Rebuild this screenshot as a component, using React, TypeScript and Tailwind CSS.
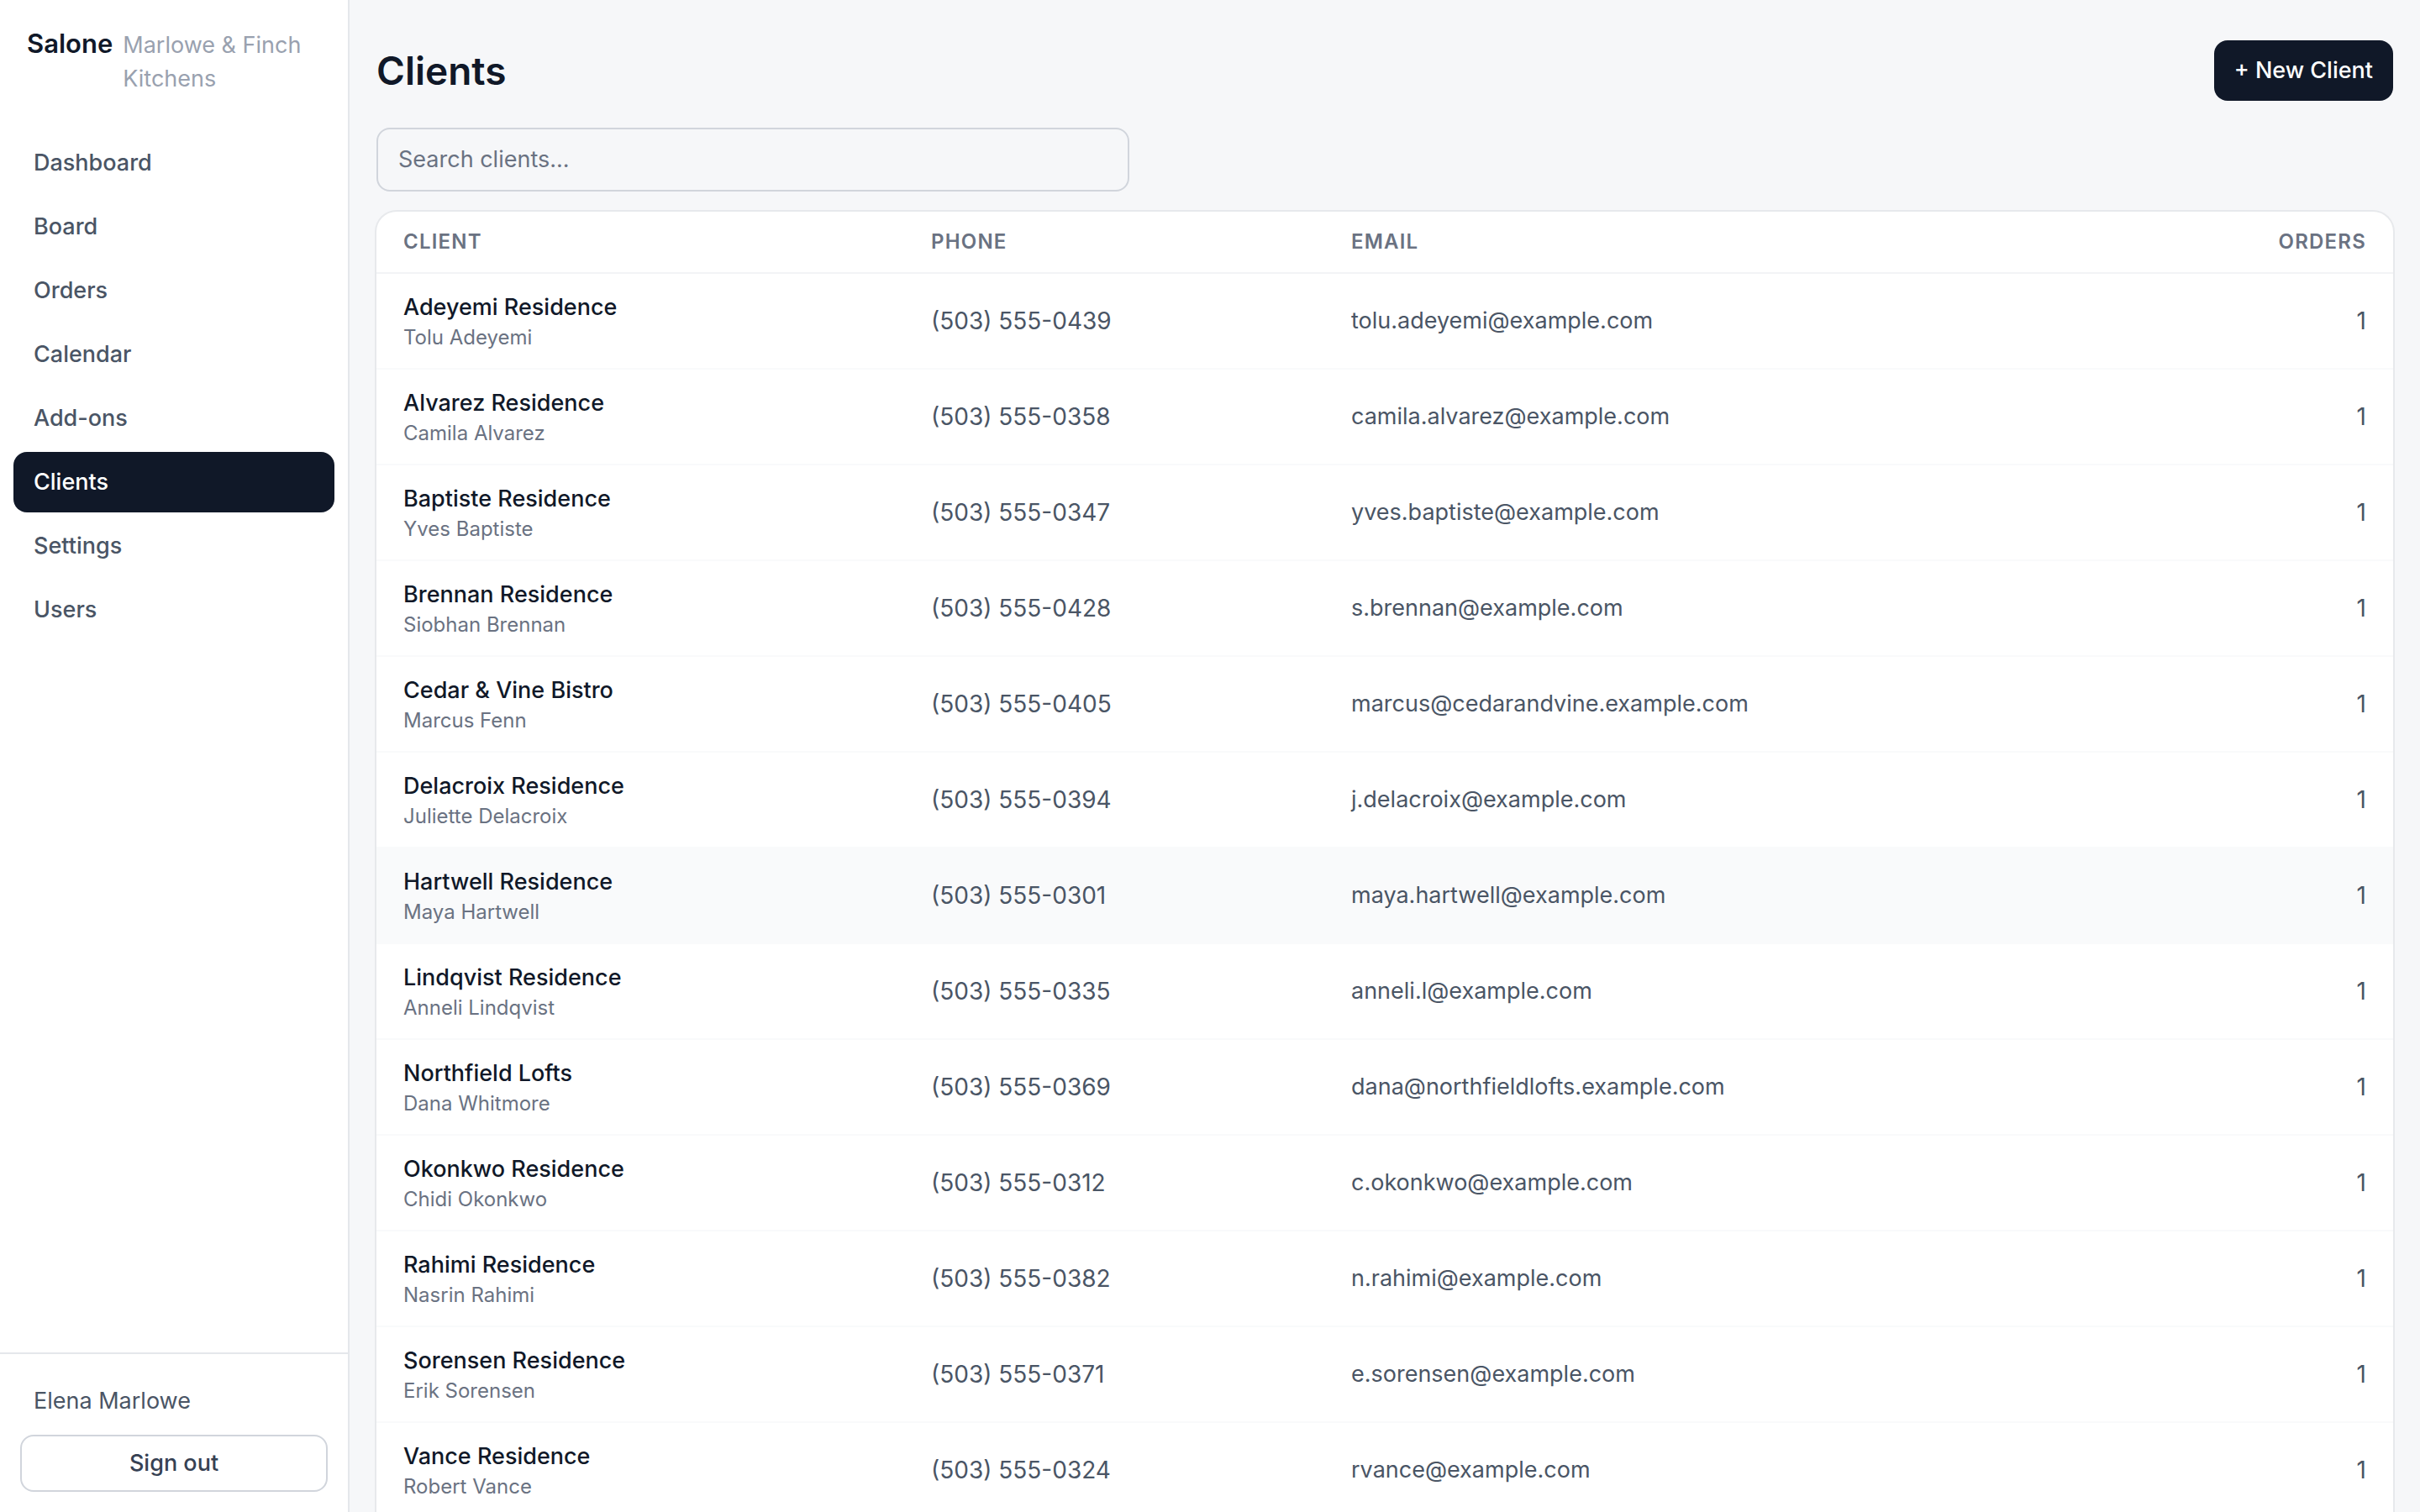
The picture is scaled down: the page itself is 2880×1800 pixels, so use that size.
const navItems = ["Dashboard", "Board", "Orders", "Calendar", "Add-ons", "Clients", "Settings", "Users"];

type Client = { name: string; contact: string; phone: string; email: string; orders: number };

const clients: Client[] = [
  { name: "Adeyemi Residence", contact: "Tolu Adeyemi", phone: "(503) 555-0439", email: "tolu.adeyemi@example.com", orders: 1 },
  { name: "Alvarez Residence", contact: "Camila Alvarez", phone: "(503) 555-0358", email: "camila.alvarez@example.com", orders: 1 },
  { name: "Baptiste Residence", contact: "Yves Baptiste", phone: "(503) 555-0347", email: "yves.baptiste@example.com", orders: 1 },
  { name: "Brennan Residence", contact: "Siobhan Brennan", phone: "(503) 555-0428", email: "s.brennan@example.com", orders: 1 },
  { name: "Cedar & Vine Bistro", contact: "Marcus Fenn", phone: "(503) 555-0405", email: "marcus@cedarandvine.example.com", orders: 1 },
  { name: "Delacroix Residence", contact: "Juliette Delacroix", phone: "(503) 555-0394", email: "j.delacroix@example.com", orders: 1 },
  { name: "Hartwell Residence", contact: "Maya Hartwell", phone: "(503) 555-0301", email: "maya.hartwell@example.com", orders: 1 },
  { name: "Lindqvist Residence", contact: "Anneli Lindqvist", phone: "(503) 555-0335", email: "anneli.l@example.com", orders: 1 },
  { name: "Northfield Lofts", contact: "Dana Whitmore", phone: "(503) 555-0369", email: "dana@northfieldlofts.example.com", orders: 1 },
  { name: "Okonkwo Residence", contact: "Chidi Okonkwo", phone: "(503) 555-0312", email: "c.okonkwo@example.com", orders: 1 },
  { name: "Rahimi Residence", contact: "Nasrin Rahimi", phone: "(503) 555-0382", email: "n.rahimi@example.com", orders: 1 },
  { name: "Sorensen Residence", contact: "Erik Sorensen", phone: "(503) 555-0371", email: "e.sorensen@example.com", orders: 1 },
  { name: "Vance Residence", contact: "Robert Vance", phone: "(503) 555-0324", email: "rvance@example.com", orders: 1 },
];

function Sidebar() {
  return (
    <aside className="flex w-104 shrink-0 flex-col border-r-2 border-[#e5e7eb] bg-white">
      <div className="flex items-baseline gap-3 px-8 pt-7 pb-7">
        <span className="text-[31px] leading-12 font-semibold text-[#101828]">Salone</span>
        <span className="text-[27px] leading-10 text-[#99a1af]">Marlowe &amp; Finch Kitchens</span>
      </div>
      <nav className="flex flex-1 flex-col gap-1 p-4">
        {navItems.map((item) => (
          <a
            key={item}
            href="#"
            aria-current={item === "Clients" ? "page" : undefined}
            className={
              item === "Clients"
                ? "rounded-2xl bg-[#101828] px-6 py-4 text-[27px] leading-10 font-medium text-white"
                : "rounded-2xl px-6 py-4 text-[27px] leading-10 font-medium text-[#4a5565]"
            }
          >
            {item}
          </a>
        ))}
      </nav>
      <div className="border-t-2 border-[#e5e7eb] p-6">
        <div className="px-4 py-3 text-[27px] leading-10 text-[#4a5565]">Elena Marlowe</div>
        <button
          type="button"
          className="mt-2 w-full rounded-2xl border-2 border-[#d1d5dc] py-3 text-[27px] leading-10 font-medium text-[#364153]"
        >
          Sign out
        </button>
      </div>
    </aside>
  );
}

function ClientTable() {
  return (
    <div className="mt-6 overflow-hidden rounded-3xl bg-white pb-8 ring-2 ring-[#e7e9ec]">
      <table className="w-full table-fixed border-separate border-spacing-0 text-left">
        <thead>
          <tr className="text-2xl leading-8 tracking-wider text-[#6a7282] uppercase">
            <th scope="col" className="w-157/600 border-b-2 border-[#f3f4f6] px-8 py-5 font-semibold">Client</th>
            <th scope="col" className="w-5/24 border-b-2 border-[#f3f4f6] px-8 py-5 font-semibold">Phone</th>
            <th scope="col" className="border-b-2 border-[#f3f4f6] px-8 py-5 font-semibold">Email</th>
            <th scope="col" className="w-1/8 border-b-2 border-[#f3f4f6] px-8 py-5 text-right font-semibold">Orders</th>
          </tr>
        </thead>
        <tbody className="text-[27px] leading-10 text-[#4a5565]">
          {clients.map((client) => (
            <tr key={client.name} className={client.name === "Hartwell Residence" ? "bg-[#f9fafb]" : "bg-white"}>
              <td className="border-b-2 border-[#f9fafb] px-8 py-5">
                <div className="font-medium text-[#101828]">{client.name}</div>
                <div className="text-2xl leading-8 text-[#6a7282]">{client.contact}</div>
              </td>
              <td className="border-b-2 border-[#f9fafb] px-8 py-5 text-[28px]">{client.phone}</td>
              <td className="border-b-2 border-[#f9fafb] px-8 py-5">{client.email}</td>
              <td className="border-b-2 border-[#f9fafb] px-8 py-5 text-right text-[28px]">{client.orders}</td>
            </tr>
          ))}
        </tbody>
      </table>
    </div>
  );
}

export default function App() {
  return (
    <div className="flex h-screen overflow-hidden bg-[#f6f7f9] font-['Inter',sans-serif] antialiased">
      <Sidebar />
      <main className="min-w-0 flex-1 overflow-y-auto px-8 pt-12 [scrollbar-width:none]">
        <header className="flex items-center justify-between">
          <h1 className="text-[46px] leading-14 font-semibold text-[#101828]">Clients</h1>
          <button type="button" className="rounded-2xl bg-[#101828] px-6 py-4 text-[27px] leading-10 font-medium text-white">
            + New Client
          </button>
        </header>
        <input
          type="search"
          aria-label="Search clients"
          placeholder="Search clients..."
          className="mt-8 block w-full max-w-4xl rounded-2xl border-2 border-[#d1d5dc] bg-transparent px-6 py-4 text-[27px] leading-10 text-[#101828] outline-none placeholder:text-[#6a7282]"
        />
        <ClientTable />
      </main>
    </div>
  );
}
